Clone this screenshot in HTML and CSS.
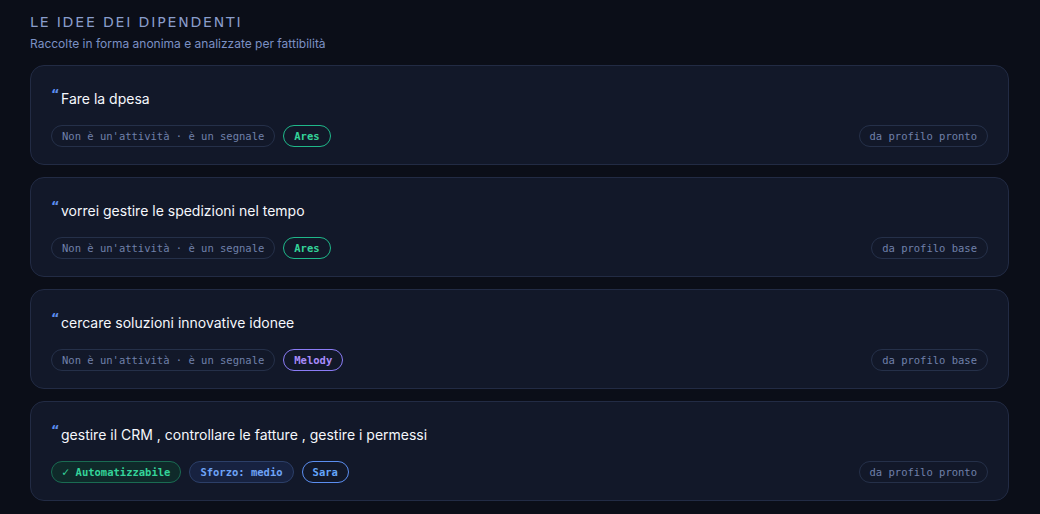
FILE: index.html
```html
<!DOCTYPE html>
<html lang="it">
<head>
    <meta charset="UTF-8">
    <meta name="viewport" content="width=device-width, initial-scale=1.0">
    <title>Le idee dei dipendenti</title>
    <link rel="stylesheet" href="styles.css">
</head>
<body>
    <section class="ideas">
        <header class="ideas-header">
            <h2 class="ideas-title">Le idee dei dipendenti</h2>
            <p class="ideas-sub">Raccolte in forma anonima e analizzate per fattibilità</p>
        </header>

        <div class="idea-list">
            <article class="idea-card">
                <p class="idea-text"><span class="quote">&ldquo;</span>Fare la dpesa</p>
                <div class="idea-meta">
                    <div class="chips">
                        <span class="chip chip-muted">Non è un'attività · è un segnale</span>
                        <span class="chip chip-green">Ares</span>
                    </div>
                    <span class="chip chip-muted">da profilo pronto</span>
                </div>
            </article>

            <article class="idea-card">
                <p class="idea-text"><span class="quote">&ldquo;</span>vorrei gestire le spedizioni nel tempo</p>
                <div class="idea-meta">
                    <div class="chips">
                        <span class="chip chip-muted">Non è un'attività · è un segnale</span>
                        <span class="chip chip-green">Ares</span>
                    </div>
                    <span class="chip chip-muted">da profilo base</span>
                </div>
            </article>

            <article class="idea-card">
                <p class="idea-text"><span class="quote">&ldquo;</span>cercare soluzioni innovative idonee</p>
                <div class="idea-meta">
                    <div class="chips">
                        <span class="chip chip-muted">Non è un'attività · è un segnale</span>
                        <span class="chip chip-purple">Melody</span>
                    </div>
                    <span class="chip chip-muted">da profilo base</span>
                </div>
            </article>

            <article class="idea-card">
                <p class="idea-text"><span class="quote">&ldquo;</span>gestire il CRM , controllare le fatture , gestire i permessi</p>
                <div class="idea-meta">
                    <div class="chips">
                        <span class="chip chip-auto"><span class="tick">✓</span> Automatizzabile</span>
                        <span class="chip chip-effort">Sforzo: medio</span>
                        <span class="chip chip-blue">Sara</span>
                    </div>
                    <span class="chip chip-muted">da profilo pronto</span>
                </div>
            </article>
        </div>
    </section>
</body>
</html>
```

FILE: styles.css
```css
body {
    margin: 0;
    padding: 0;
    background-color: #0b0e18;
    color: #fff;
    font-family: 'Inter', 'Noto Sans', sans-serif;
}

.ideas {
    padding: 13px 31px 0 30px;
}

.ideas-title {
    margin: 0;
    font-family: 'DejaVu Sans', sans-serif;
    font-size: 14px;
    font-weight: normal;
    letter-spacing: 1.85px;
    text-transform: uppercase;
    color: #8a9dcc;
    line-height: 18px;
}

.ideas-sub {
    margin: 4px 0 0;
    font-size: 12px;
    line-height: 17px;
    color: #7b90c4;
}

.idea-list {
    margin-top: 13px;
    display: flex;
    flex-direction: column;
    gap: 12px;
}

.idea-card {
    background-color: #121829;
    border: 1px solid #222b44;
    border-radius: 14px;
    padding: 22px 20px 17px;
}

.idea-text {
    margin: 0;
    height: 21px;
    font-size: 14px;
    line-height: 21px;
    color: #f5f7fc;
}

/* opening quote sits high, like a superscript */
.quote {
    display: inline-block;
    vertical-align: top;
    width: 10px;
    font-family: 'DejaVu Sans', sans-serif;
    font-size: 13px;
    font-weight: bold;
    line-height: 12px;
    color: #5b8def;
}

.idea-meta {
    margin-top: 16px;
    height: 22px;
    display: flex;
    justify-content: space-between;
    align-items: center;
}

.chips {
    display: flex;
    gap: 8px;
}

.chip {
    display: inline-block;
    box-sizing: border-box;
    padding: 0 10px;
    height: 22px;
    line-height: 20px;
    border: 1px solid #253049;
    border-radius: 11px;
    font-family: 'DejaVu Sans Mono', monospace;
    font-size: 10.5px;
    white-space: nowrap;
}

.tick {
    font-size: 12px;
}

.chip-muted { color: #7080aa; border-color: #253049; }
.chip-green { color: #34d399; border-color: #1fb88a; font-weight: bold; }
.chip-purple { color: #a78bfa; border-color: #8b7cf6; font-weight: bold; }
.chip-blue { color: #63a4fa; border-color: #5b8ef0; font-weight: bold; }
.chip-auto { color: #34d399; border-color: #1a6b52; background-color: #0f2a2a; font-weight: bold; }
.chip-effort { color: #6ea3f7; border-color: #2c3f68; background-color: #172240; font-weight: bold; }
```
